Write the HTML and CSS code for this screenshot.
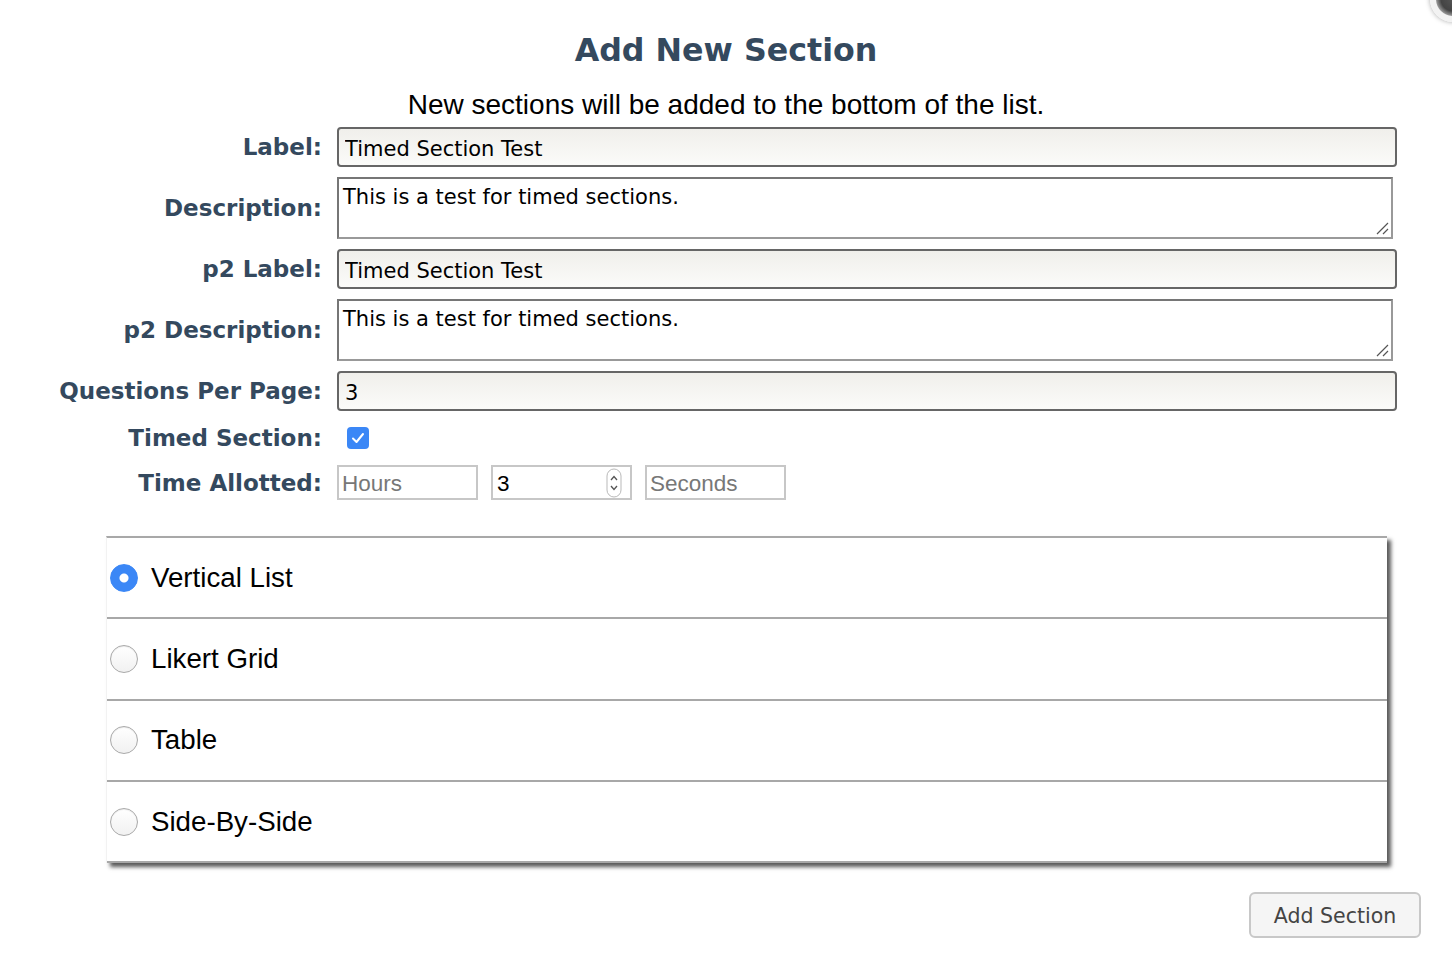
FILE: index.html
```html
<!DOCTYPE html>
<html lang="en">
<head>
    <meta charset="UTF-8">
    <meta name="viewport" content="width=device-width, initial-scale=1.0">
    <title>Add New Section</title>
    <link rel="stylesheet" href="styles.css">
</head>
<body>

    <div class="dialog">
        <button class="close-btn" type="button" aria-label="Close"></button>

        <h1>Add New Section</h1>
        <p class="note">New sections will be added to the bottom of the list.</p>

        <form id="section-form" class="section-form">
            <label for="label">Label:</label>
            <input type="text" id="label" class="text-field" value="Timed Section Test">

            <label for="description">Description:</label>
            <div class="area-wrap">
                <textarea id="description" class="area-field">This is a test for timed sections.</textarea>
                <svg class="grip" width="14" height="14" viewBox="0 0 14 14">
                    <path d="M2 13 L13 2 M8 13 L13 8" stroke="#555" stroke-width="1.2"/>
                </svg>
            </div>

            <label for="p2_label">p2 Label:</label>
            <input type="text" id="p2_label" class="text-field" value="Timed Section Test">

            <label for="p2_description">p2 Description:</label>
            <div class="area-wrap">
                <textarea id="p2_description" class="area-field">This is a test for timed sections.</textarea>
                <svg class="grip" width="14" height="14" viewBox="0 0 14 14">
                    <path d="M2 13 L13 2 M8 13 L13 8" stroke="#555" stroke-width="1.2"/>
                </svg>
            </div>

            <label for="per_page">Questions Per Page:</label>
            <input type="text" id="per_page" class="text-field" value="3">

            <label for="timed">Timed Section:</label>
            <div class="check-row">
                <span class="check" id="timed">
                    <svg width="22" height="22" viewBox="0 0 22 22">
                        <path d="M6 11.5 L9.5 15 L16 7" fill="none" stroke="#fff" stroke-width="2" stroke-linecap="round" stroke-linejoin="round"/>
                    </svg>
                </span>
            </div>

            <label for="hours">Time Allotted:</label>
            <div class="time-row">
                <input type="text" id="hours" class="time-field" placeholder="Hours">
                <div class="time-field spin-field">
                    <input type="text" value="3">
                    <svg class="spinner" width="16" height="30" viewBox="0 0 16 30">
                        <rect x="1" y="1" width="14" height="28" rx="7" fill="#fff" stroke="#b9b9b9"/>
                        <path d="M5 12 L8 8.5 L11 12" fill="none" stroke="#555" stroke-width="1.3"/>
                        <path d="M5 18 L8 21.5 L11 18" fill="none" stroke="#555" stroke-width="1.3"/>
                    </svg>
                </div>
                <input type="text" id="seconds" class="time-field" placeholder="Seconds">
            </div>
        </form>

        <ul class="layout-list">
            <li><label><input type="radio" name="layout" checked> Vertical List</label></li>
            <li><label><input type="radio" name="layout"> Likert Grid</label></li>
            <li><label><input type="radio" name="layout"> Table</label></li>
            <li><label><input type="radio" name="layout"> Side-By-Side</label></li>
        </ul>

        <div class="actions">
            <button type="submit" form="section-form" class="add-btn">Add Section</button>
        </div>
    </div>

</body>
</html>
```

FILE: styles.css
```css
body {
    margin: 0;
    background-color: #fff;
    font-family: "DejaVu Sans", Verdana, sans-serif;
    overflow: hidden;
}
.dialog {
    position: relative;
    height: 972px;
    padding-top: 28px;
    box-sizing: border-box;
}
.close-btn {
    position: absolute;
    top: -24px;
    right: -24px;
    width: 46px;
    height: 46px;
    border-radius: 50%;
    border: 6px solid #f2f2f2;
    background: radial-gradient(circle, #555 0, #444 50%, #999 70%, #e5e5e5 100%);
    box-shadow: 0 0 5px rgba(0, 0, 0, 0.35);
    padding: 0;
}
h1 {
    margin: 0;
    text-align: center;
    font-size: 31.7px;
    line-height: 44px;
    font-weight: bold;
    color: #34495e;
}
.note {
    margin: 17px 0 6px;
    text-align: center;
    font-family: "Liberation Sans", Arial, sans-serif;
    font-size: 28px;
    line-height: 32px;
    color: #000;
}
.section-form {
    display: grid;
    grid-template-columns: 322px 1060px;
    column-gap: 15px;
    row-gap: 10px;
    align-items: center;
}
.section-form > label {
    text-align: right;
    font-size: 23px;
    font-weight: bold;
    color: #34495e;
    white-space: nowrap;
}
.text-field {
    height: 40px;
    width: 100%;
    box-sizing: border-box;
    padding: 3px 6px 0;
    border: 2px solid #666;
    border-radius: 4px;
    background: linear-gradient(#f0efeb, #fbfbf9);
    font-family: "DejaVu Sans", Verdana, sans-serif;
    font-size: 21px;
    color: #000;
}
.area-wrap {
    position: relative;
    width: 1056px;
    height: 62px;
}
.area-field {
    display: block;
    height: 62px;
    width: 1056px;
    box-sizing: border-box;
    padding: 6px 4px 4px;
    border: 2px solid #999;
    border-top-color: #767676;
    border-left-color: #767676;
    font-family: "DejaVu Sans", Verdana, sans-serif;
    font-size: 21px;
    line-height: 24px;
    color: #000;
    background: #fff;
    resize: none;
}
.grip {
    position: absolute;
    right: 4px;
    bottom: 4px;
}
.check-row {
    height: 34px;
    display: flex;
    align-items: center;
}
.check {
    display: block;
    width: 22px;
    height: 22px;
    margin-left: 10px;
    background-color: #3b87f6;
    border-radius: 4px;
}
.check svg {
    display: block;
}
.time-row {
    display: flex;
    gap: 13px;
}
.time-field {
    width: 141px;
    height: 35px;
    box-sizing: border-box;
    padding: 2px 3px 0;
    border: 2px solid #c7c7c7;
    font-family: "Liberation Sans", Arial, sans-serif;
    font-size: 22.5px;
    color: #000;
    background: #fff;
}
.time-field::placeholder {
    color: #777;
}
.spin-field {
    display: flex;
    align-items: center;
    padding: 0 8px 0 3px;
}
.spin-field input {
    flex: 1;
    min-width: 0;
    border: none;
    outline: none;
    padding: 2px 1px 0;
    font-family: inherit;
    font-size: inherit;
    background: transparent;
}
.layout-list {
    list-style: none;
    margin: 36px 0 0 106px;
    padding: 0;
    width: 1280px;
    border-top: 2px solid #a8a8a8;
    border-left: 1px solid #f2f2f2;
    box-shadow: 4px 4px 4px rgba(0, 0, 0, 0.65);
}
.layout-list li {
    height: 79.3px;
    border-bottom: 2px solid #a8a8a8;
    display: flex;
    align-items: center;
}
.layout-list label {
    display: flex;
    align-items: center;
    gap: 13px;
    font-family: "Liberation Sans", Arial, sans-serif;
    font-size: 27.7px;
    color: #000;
}
.layout-list input[type="radio"] {
    appearance: none;
    margin: 0 0 0 3px;
    width: 28px;
    height: 28px;
    border-radius: 50%;
    border: 1px solid #a9a9a9;
    background: linear-gradient(#fff, #f1f1f1);
    box-shadow: inset 0 1px 1px rgba(0, 0, 0, 0.08);
}
.layout-list input[type="radio"]:checked {
    border-color: #3b87f6;
    background: radial-gradient(circle, #fff 0, #fff 4px, #3b87f6 5px);
    box-shadow: none;
}
.actions {
    display: flex;
    justify-content: flex-end;
    margin-top: 29px;
    padding-right: 31px;
}
.add-btn {
    width: 172px;
    height: 46px;
    padding-top: 3px;
    border: 2px solid #c8c8c8;
    border-radius: 6px;
    background-color: #f5f5f5;
    font-family: "DejaVu Sans", Verdana, sans-serif;
    font-size: 20.5px;
    color: #444;
    cursor: pointer;
}
```
